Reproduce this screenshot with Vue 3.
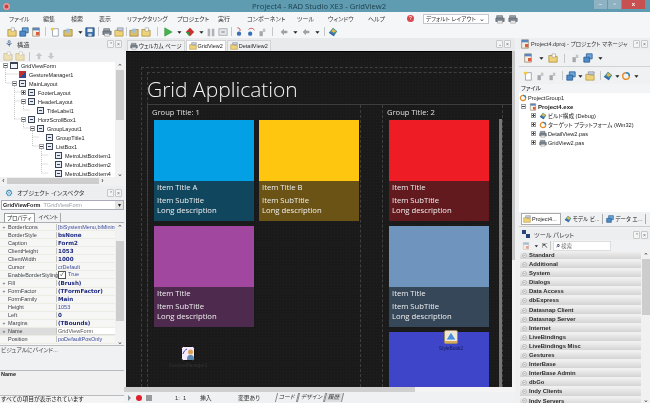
<script setup>
const menus = [
  ['ファイル', 34], ['編集', 28], ['検索', 28], ['表示', 28], ['リファクタリング', 50], ['プロジェクト', 41],
  ['実行', 29], ['コンポーネント', 50], ['ツール', 31], ['ウィンドウ', 40], ['ヘルプ', 35]
]
const main = [
  ['f', 12], ['w', 12], ['d', 12], ['', 7], ['n', 12], ['o', 14], ['c', 9], ['s', 12], ['', 5], ['p', 12], ['y', 12], ['', 3],
  ['o', 12], ['f', 12], ['', 10], ['r', 12], ['c', 10], ['b', 12], ['c', 10], ['h', 10], ['t', 14], ['', 3],
  ['j', 12], ['k', 12], ['g', 10], ['', 11], ['l', 12], ['c', 10], ['l', 12], ['c', 10], ['', 5], ['u', 12]
]
const pm1 = [['d', 12], ['c', 13], ['f', 12], ['', 10], ['g', 12], ['w', 14], ['c', 9]]
const pm2 = [['n', 12], ['g', 12], ['g', 12], ['', 8], ['w', 9], ['c', 9], ['y', 12], ['', 8], ['u', 8], ['c', 9], ['e', 10], ['c', 9]]
const tree = [
  ['GridViewForm', 0, 'm', 'frm'], ['GestureManager1', 1, '', 'gm'], ['MainLayout', 1, 'm', 'lay'],
  ['FooterLayout', 2, 'p', 'lay'], ['HeaderLayout', 2, 'm', 'lay'], ['TitleLabel1', 3, '', 'lay'],
  ['HorzScrollBox1', 2, 'm', 'lay'], ['GroupLayout1', 3, 'm', 'lay'], ['GroupTitle1', 4, '', 'lay'],
  ['ListBox1', 4, 'm', 'lay'], ['MetroListBoxItem1', 5, '', 'lay'], ['MetroListBoxItem2', 5, '', 'lay'], ['MetroListBoxItem4', 5, '', 'lay']
]
const props = [
  ['BorderIcons', '[biSystemMenu,biMinim', 'n', true], ['BorderStyle', 'bsNone', 'b'], ['Caption', 'Form2', 'b'],
  ['ClientHeight', '1053', 'b'], ['ClientWidth', '1000', 'b'], ['Cursor', 'crDefault', 'n'],
  ['EnableBorderStyling', 'True', 'k'], ['Fill', '(Brush)', 'b', true], ['FormFactor', '(TFormFactor)', 'b', true],
  ['FormFamily', 'Main', 'b'], ['Height', '1053', 'n'], ['Left', '0', 'b'], ['Margins', '(TBounds)', 'b', true],
  ['Name', 'GridViewForm', 'x'], ['Position', 'poDefaultPosOnly', 'n']
]
const group1 = [
  { t: 'Item Title A', c: '#04a0e6', d: '#11465f' },
  { t: 'Item Title B', c: '#ffc60f', d: '#6a5314' },
  { t: 'Item Title', c: '#a1479f', d: '#4e2a4f' }
]
const group2 = [
  { t: 'Item Title', c: '#ee1c25', d: '#631a1f' },
  { t: 'Item Title', c: '#6f95bf', d: '#36475a' },
  { t: '', c: '#3e45c9', d: '#3e45c9' }
]
const files = [
  ['ProjectGroup1', 0, '', 'e', ''], ['Project4.exe', 1, 'm', 'd', 'bold'], ['ビルド構成 (Debug)', 2, 'p', 'u', ''],
  ['ターゲット プラットフォーム (Win32)', 2, 'p', 'e', ''], ['DetailView2.pas', 2, 'p', 'p', ''], ['GridView2.pas', 2, 'p', 'p', '']
]
const palette = ['Standard', 'Additional', 'System', 'Dialogs', 'Data Access', 'dbExpress', 'Datasnap Client', 'Datasnap Server', 'Internet',
  'LiveBindings', 'LiveBindings Misc', 'Gestures', 'InterBase', 'InterBase Admin', 'dbGo', 'Indy Clients', 'Indy Servers']
</script>

<template>
  <div class="ide">
    <svg class="defs" aria-hidden="true">
      <symbol id="f" viewBox="0 0 12 12"><path d="M1 3h4l1 1h5v7H1z" fill="#ecd27a" stroke="#a8842c" stroke-width=".8"/><path d="M5 1h4v4H5z" fill="#fff" stroke="#888" stroke-width=".6"/></symbol>
      <symbol id="w" viewBox="0 0 12 12"><path d="M4 1h7v6H4z" fill="#6ea6d8" stroke="#2c5f96"/><path d="M1 5h7v6H1z" fill="#4d8ac6" stroke="#2c5f96"/></symbol>
      <symbol id="d" viewBox="0 0 12 12"><path d="M2 1h8v10H2z" fill="#f5efe2" stroke="#8a7a60" stroke-width=".8"/><path d="M2 1h8v3H2z" fill="#5a86c0"/><path d="M6 6h4v4H6z" fill="#e05a3c"/></symbol>
      <symbol id="n" viewBox="0 0 12 12"><path d="M3 2h7v9H3z" fill="#fff" stroke="#7a8a9a" stroke-width=".8"/><path d="M1 1h4v3H1z" fill="#f0c94a"/></symbol>
      <symbol id="o" viewBox="0 0 12 12"><path d="M1 4h4l1-1h5v8H1z" fill="#ddc06a" stroke="#8f7a3c" stroke-width=".8"/><path d="M4 2h4v5H4z" fill="#9ac1e4"/></symbol>
      <symbol id="s" viewBox="0 0 12 12"><path d="M1 1h10v10H1z" fill="#3f72ad" stroke="#234a78"/><path d="M3 2h6v4H3z" fill="#e9f0f7"/><path d="M4 8h4v3H4z" fill="#cfd8e2"/></symbol>
      <symbol id="p" viewBox="0 0 12 12"><path d="M2 2h7v3H2z" fill="#9aa4ae" stroke="#59626b" stroke-width=".7"/><path d="M1 5h10v4H1z" fill="#7a8590" stroke="#4d555d" stroke-width=".7"/><path d="M3 8h6v3H3z" fill="#eee" stroke="#777" stroke-width=".5"/></symbol>
      <symbol id="y" viewBox="0 0 12 12"><path d="M1 4h4l1 1h5v6H1z" fill="#ecd27a" stroke="#a8842c" stroke-width=".7"/><path d="M4 1h7v3H4z" fill="#c8d4e2" stroke="#667" stroke-width=".6"/></symbol>
      <symbol id="r" viewBox="0 0 12 12"><path d="M2 1l9 5-9 5z" fill="#43b54a" stroke="#2a8a34" stroke-width=".6"/></symbol>
      <symbol id="b" viewBox="0 0 12 12"><path d="M6 1l5 5-5 5-5-5z" fill="#c92f2f"/><path d="M1 6h4v5z" fill="#2f9a3b"/></symbol>
      <symbol id="h" viewBox="0 0 12 12"><path d="M2 2h3v9H2zM7 2h3v9H7z" fill="#aeb2b6"/></symbol>
      <symbol id="t" viewBox="0 0 12 12"><path d="M1 2h10v8H1z" fill="#e3e5e7" stroke="#a5a9ad"/><path d="M4 5h4v2H4z" fill="#a5a9ad"/></symbol>
      <symbol id="j" viewBox="0 0 12 12"><path d="M4 1c3 0 4 2 3 4" fill="none" stroke="#c03c3c"/><circle cx="6" cy="8" r="2.6" fill="#3a70b8"/></symbol>
      <symbol id="k" viewBox="0 0 12 12"><path d="M3 3c2-2 6-2 7 1" fill="none" stroke="#c03c3c"/><circle cx="5" cy="8" r="2.6" fill="#3a70b8"/></symbol>
      <symbol id="g" viewBox="0 0 12 12"><path d="M3 5h4v6H3z" fill="#a4a8ac"/><path d="M7 2h3v4H7z" fill="#c2c5c8"/></symbol>
      <symbol id="l" viewBox="0 0 12 12"><path d="M2 6l4-4v2.500h4v3H6V10z" fill="#9da1a5"/></symbol>
      <symbol id="u" viewBox="0 0 12 12"><path d="M6 1l5 4-4 6-6-4z" fill="#3b8a9a"/><path d="M6 2l4 3-3 2-3-2z" fill="#e0b94e"/><path d="M1 7l6 4 1-2-5-3z" fill="#3a6ab0"/></symbol>
      <symbol id="e" viewBox="0 0 12 12"><circle cx="6" cy="6" r="4" fill="none" stroke="#e38b2c" stroke-width="1.8"/><path d="M6 2a4 4 0 0 1 4 4" fill="none" stroke="#2e8fd0" stroke-width="1.8"/></symbol>
      <symbol id="c" viewBox="0 0 12 12"><path d="M4 5h5L6.500 8z" fill="#222"/></symbol>
    </svg>

    <header class="title">
      <span class="app-dot"></span>
      <span class="title-text">Project4 - RAD Studio XE3 - GridView2</span>
      <div class="win">
        <span class="wb">–</span><span class="wb">▫</span><span class="wb close">x</span>
      </div>
    </header>

    <nav class="menu">
      <span v-for="m in menus" :key="m[0]" class="mi" :style="{ width: m[1] + 'px' }">{{ m[0] }}</span>
      <span class="help">?</span>
      <div class="combo"><span>デフォルト レイアウト</span><i>⌄</i></div>
      <svg class="ti12 gap-a"><use href="#p"/></svg>
      <svg class="ti12"><use href="#p"/></svg>
    </nav>

    <div class="toolbar">
      <span v-for="(b, i) in main" :key="i" class="cell" :style="{ width: b[1] + 'px' }">
        <svg v-if="b[0]" class="ti"><use :href="'#' + b[0]"/></svg>
        <b v-else class="sep"></b>
      </span>
    </div>

    <div class="body">
      <aside class="left">
        <div class="phead">
          <span class="pglyph">⚘</span><span class="ptext">構造</span>
          <span class="pin">⌃</span><span class="pin">×</span>
        </div>
        <div class="subbar">
          <svg class="ti dim"><use href="#f"/></svg><svg class="ti dim"><use href="#f"/></svg>
          <b class="sep"></b>
          <svg class="ti dim up"><use href="#l"/></svg><svg class="ti dim down"><use href="#l"/></svg>
        </div>
        <div class="tree-wrap">
          <div class="tree">
            <svg class="tlines" viewBox="0 0 115 115" aria-hidden="true">
              <path d="M5.500 6V21H12M5.500 12H20M14.500 24V57M14.500 30H21M14.500 39H21M14.500 57H21M23.500 42V48H30M23.500 60V66H30M32.500 69V84H39M32.500 75H39M41.500 87V111H48M41.500 93H48M41.500 102H48" fill="none" stroke="#aaa" stroke-width=".7" stroke-dasharray="1 1"/>
            </svg>
            <div v-for="n in tree" :key="n[0]" class="tr" :class="'lv' + n[1]">
              <span class="exp" :class="n[2]"></span>
              <span class="nico" :class="n[3]"></span>
              <span class="nlabel">{{ n[0] }}</span>
            </div>
          </div>
          <div class="vs"><i class="arr">⌃</i><b class="thumb t1"></b><i class="arr">⌄</i></div>
        </div>
        <div class="hs"><i>‹</i><b></b><i>›</i></div>

        <div class="phead oi">
          <span class="pglyph blue">⚙</span><span class="ptext">オブジェクト インスペクタ</span>
          <span class="pin">⌃</span><span class="pin">×</span>
        </div>
        <div class="oicombo"><b>GridViewForm</b><em>TGridViewForm</em><i>▾</i></div>
        <div class="oitabs"><span class="on">プロパティ</span><span>イベント</span></div>
        <div class="grid-wrap">
          <div class="pgrid">
            <div v-for="p in props" :key="p[0]" class="pr" :class="{ sel: p[0] === 'Name' }">
              <span class="pmark">{{ p[3] ? '+' : (p[0] === 'Name' ? '»' : '') }}</span>
              <span class="pn">{{ p[0] }}</span>
              <span class="pv" :class="p[2]"><u v-if="p[2] === 'k'" class="check">✓</u>{{ p[1] }}</span>
            </div>
          </div>
          <div class="vs"><i class="arr">⌃</i><b class="thumb t2"></b><i class="arr">⌄</i></div>
        </div>
        <div class="bind">ビジュアルにバインド...</div>
        <div class="info"><b>Name</b></div>
        <div class="allshown">すべての項目が表示されています</div>
      </aside>

      <main class="center">
        <div class="tabs">
          <span class="tab"><svg class="ti tiny"><use href="#p"/></svg>ウェルカム ページ</span>
          <span class="tab on"><svg class="ti tiny"><use href="#y"/></svg>GridView2</span>
          <span class="tab"><svg class="ti tiny"><use href="#y"/></svg>DetailView2</span>
          <span class="tabs-pins"><span class="pin">⌄</span><span class="pin">×</span></span>
        </div>
        <div class="designer">
          <div class="canvas">
            <div class="form">
              <div class="inner">
                <div class="apptitle">Grid Application</div>
                <div class="groups">
                  <section class="group g1">
                    <div class="gtitle">Group Title: 1</div>
                    <div class="tiles two">
                      <article v-for="(x, i) in group1" :key="i" class="tile">
                        <div class="swatch" :style="{ background: x.c }"></div>
                        <div class="cap" :style="{ background: x.d }">
                          <div class="c1">{{ x.t }}</div><div>Item SubTitle</div><div>Long description</div>
                        </div>
                      </article>
                    </div>
                  </section>
                  <section class="group g2">
                    <div class="gtitle">Group Title: 2</div>
                    <div class="tiles">
                      <article v-for="(x, i) in group2" :key="i" class="tile">
                        <div class="swatch" :style="{ background: x.c }"></div>
                        <div class="cap" :style="{ background: x.d }">
                          <template v-if="x.t"><div class="c1">{{ x.t }}</div><div>Item SubTitle</div><div>Long description</div></template>
                        </div>
                      </article>
                    </div>
                    <b class="gscroll"></b>
                  </section>
                </div>
              </div>
            </div>
            <div class="nv nv-g">
              <svg viewBox="0 0 14 15"><rect x=".5" y=".5" width="13" height="14" rx="2" fill="#f6e9fb" stroke="#111"/><path d="M2 8c1-3 2-4 4-5" fill="none" stroke="#2a3fb0"/><circle cx="9.500" cy="6" r="2.500" fill="#d7a052"/><path d="M6 14c0-4 1-5 3.500-5S13 10 13 14z" fill="#5c88b0"/></svg>
              <span>GestureManager1</span>
            </div>
            <div class="nv nv-s">
              <svg viewBox="0 0 14 14"><rect x=".5" y=".5" width="13" height="13" rx="1.500" fill="#f1e6d0" stroke="#9a8a68"/><path d="M7 2l5 8H2z" fill="#4c8fd8" stroke="#fff" stroke-width=".7"/><path d="M1 11h12v2H1z" fill="#d8a95c"/></svg>
              <span>StyleBook2</span>
            </div>
          </div>
          <div class="dvs"><b></b></div>
        </div>
        <div class="chs"><b></b></div>
        <footer class="status">
          <i class="st-play"></i><i class="st-rec"></i><i class="st-stop"></i>
          <span class="pos">1:&nbsp;&nbsp;1</span>
          <span class="mode">挿入</span>
          <span class="mod">変更あり</span>
          <span class="vt">コード</span><span class="vt">デザイン</span><span class="vt on">履歴</span>
        </footer>
      </main>

      <aside class="right">
        <div class="phead rh">
          <svg class="ti"><use href="#d"/></svg><span class="ptext small">Project4.dproj - プロジェクト マネージャ</span>
          <span class="pin">⌃</span><span class="pin">×</span>
        </div>
        <div class="rbar r1"><span v-for="(b, i) in pm1" :key="i" class="cell" :style="{ width: b[1] + 'px' }">
          <svg v-if="b[0]" class="ti"><use :href="'#' + b[0]"/></svg><b v-else class="sep"></b></span></div>
        <div class="rbar r2"><span v-for="(b, i) in pm2" :key="i" class="cell" :style="{ width: b[1] + 'px' }">
          <svg v-if="b[0]" class="ti"><use :href="'#' + b[0]"/></svg><b v-else class="sep"></b></span></div>
        <div class="fhead">ファイル</div>
        <div class="files">
          <div v-for="f in files" :key="f[0]" class="fr" :class="'fl' + f[1]">
            <span class="exp" :class="f[2]"></span>
            <svg class="ti tiny2"><use :href="'#' + f[3]"/></svg>
            <span :class="f[4]">{{ f[0] }}</span>
          </div>
        </div>
        <div class="rtabs">
          <span class="rt on"><svg class="ti tiny"><use href="#y"/></svg>Project4...</span>
          <span class="rt"><svg class="ti tiny"><use href="#u"/></svg>モデル ビ...</span>
          <span class="rt"><svg class="ti tiny"><use href="#w"/></svg>データ エ...</span>
        </div>
        <div class="phead tp">
          <span class="pglyph navy">▚</span><span class="ptext">ツール パレット</span>
          <span class="pin">⌃</span><span class="pin">×</span>
        </div>
        <div class="search">
          <svg class="ti tiny2 dim"><use href="#d"/></svg><svg class="ti tiny2"><use href="#c"/></svg>
          <span class="cursor">⇱</span><b class="sep"></b>
          <div class="sbox"><span class="lens">⌕</span>検索</div>
        </div>
        <div class="pal-wrap">
          <div class="pal">
            <div v-for="p in palette" :key="p" class="pi"><i>−</i>{{ p }}</div>
          </div>
          <div class="vs"><i class="arr">⌃</i><b class="thumb t3"></b><i class="arr">⌄</i></div>
        </div>
      </aside>
    </div>
  </div>
</template>

<style scoped>
.ide {
  width: 650px; height: 403px; display: flex; flex-direction: column; overflow: hidden;
  background: #eef0f2; color: #222; font-family: "Liberation Sans", "Noto Sans CJK JP", sans-serif;
  font-size: 5.5px; font-feature-settings: "palt"; filter: blur(.35px);
}
.defs { position: absolute; width: 0; height: 0; }
.title { height: 12px; flex: none; background: #5f9cb1; display: flex; align-items: center; position: relative; }
.app-dot { width: 7px; height: 7px; border-radius: 50%; background: #c8403f; margin-left: 3px; box-shadow: inset 0 0 0 1.5px #e9a0a0; }
.title-text { position: absolute; left: 252px; top: 0; font: 7.7px/12px "Open Sans", sans-serif; color: #1c3d4b; }
.win { margin-left: auto; margin-right: 5px; display: flex; align-self: flex-start; height: 9px; gap: 1px; }
.wb { width: 13px; background: #8fb2c2; color: #fff; text-align: center; font-size: 6px; line-height: 8px; }
.close { width: 23px; background: #c75050; font-weight: bold; }
.menu { height: 13px; flex: none; background: #f5f6f7; display: flex; align-items: center; padding-left: 9px; font-size: 6px; color: #333; }
.mi { flex: none; white-space: nowrap; }
.help { width: 7px; height: 7px; border-radius: 50%; background: #d8484c; color: #fff; font-size: 5px; line-height: 7px; text-align: center; margin-left: 4px; flex: none; }
.combo { width: 66px; height: 10px; margin-left: 9px; background: #fff; border: 1px solid #c4c8cc; box-sizing: border-box; display: flex; justify-content: space-between; align-items: center; padding: 0 3px 0 2px; flex: none; font-size: 5.600px; white-space: nowrap; }
.combo i { font-style: normal; font-size: 7px; line-height: 6px; }
.ti12 { width: 10px; height: 10px; margin-left: 3px; flex: none; }
.gap-a { margin-left: 6px; }
.toolbar { height: 13px; flex: none; background: #f5f6f7; display: flex; align-items: center; padding-left: 6px; }
.cell { display: flex; justify-content: center; align-items: center; flex: none; height: 100%; }
.ti { width: 10px; height: 10px; flex: none; display: block; }
.tiny { width: 8px; height: 8px; margin-right: 1px; }
.tiny2 { width: 8px; height: 8px; }
.sep { width: 1px; height: 9px; background: #c4c6c8; display: block; flex: none; }
.dim { opacity: .5; }
.up { transform: rotate(90deg); }
.down { transform: rotate(-90deg); }

.body { flex: 1; display: flex; min-height: 0; }
.left { width: 124px; flex: none; display: flex; flex-direction: column; background: #f0f1f2; }
.phead { height: 12px; flex: none; display: flex; align-items: center; padding: 0 2px 0 5px; background: #eceef0; font-size: 6.200px; color: #333; }
.pglyph { width: 9px; font-size: 9px; line-height: 10px; color: #3b5c8e; margin-right: 3px; flex: none; }
.pglyph.blue { color: #2c86b8; }
.pglyph.navy { color: #27447a; font-size: 8px; }
.ptext { flex: 1; white-space: nowrap; overflow: hidden; }
.ptext.small { font-size: 5.600px; margin-left: 1px; }
.pin { width: 7px; height: 8px; border: 1px solid #c6c8ca; box-sizing: border-box; font-size: 5px; line-height: 6px; text-align: center; color: #666; background: #f4f4f4; flex: none; margin-left: 1px; border-radius: 1px; }
.subbar { height: 12px; flex: none; display: flex; align-items: center; gap: 2px; padding-left: 3px; }
.subbar .sep { margin: 0 2px; }
.tree-wrap { height: 115px; flex: none; display: flex; background: #fff; overflow: hidden; }
.tree { flex: 1; position: relative; overflow: hidden; color: #222; }
.tlines { position: absolute; left: 0; top: 0; width: 115px; height: 115px; }
.tr { height: 9px; display: flex; align-items: center; white-space: nowrap; position: relative; }
.tr:first-of-type { margin-top: -1px; }
.lv0 { padding-left: 3px; } .lv1 { padding-left: 12px; } .lv2 { padding-left: 21px; }
.lv3 { padding-left: 30px; } .lv4 { padding-left: 39px; } .lv5 { padding-left: 48px; }
.exp { width: 5px; height: 5px; box-sizing: border-box; margin-right: 2px; flex: none; position: relative; }
.exp.m, .exp.p { border: 1px solid #9aa0a6; background: #fff; }
.exp.m::before, .exp.p::before { content: ""; position: absolute; left: 0; right: 0; top: 1px; height: 1px; background: #444; }
.exp.p::after { content: ""; position: absolute; top: 0; bottom: 0; left: 1px; width: 1px; background: #444; }
.nico { width: 7px; height: 7px; box-sizing: border-box; border: 1px solid #3c4352; background: #e8ecf4; margin-right: 3px; flex: none; position: relative; }
.nico::after { content: ""; position: absolute; left: 1px; right: 1px; top: 2px; height: 1px; background: #3c4352; }
.nico.frm { width: 8px; border-top-width: 2px; background: #f2f4f8; }
.nico.frm::after { display: none; }
.nico.gm { border: 0; background: linear-gradient(135deg, #c62f2f 50%, #2c4b98 50%); }
.nico.gm::after { display: none; }
.vs { width: 9px; flex: none; background: #f1f1f1; display: flex; flex-direction: column; align-items: center; }
.arr { font-style: normal; height: 8px; line-height: 9px; font-size: 7px; color: #333; flex: none; }
.thumb { width: 8px; background: #cdcdcd; display: block; flex: none; }
.t1 { height: 50px; margin-bottom: auto; }
.t2 { height: 80px; margin-top: 10px; margin-bottom: auto; }
.t3 { height: 56px; margin-bottom: auto; }
.hs { height: 7px; flex: none; background: #f1f1f1; display: flex; align-items: center; font-size: 7px; margin-bottom: 2px; }
.hs i { font-style: normal; width: 7px; text-align: center; line-height: 7px; }
.hs b { width: 92px; height: 6px; background: #cdcdcd; }
.oi { height: 13px; }
.oicombo { height: 10px; flex: none; background: #fff; border: 1px solid #aab; box-sizing: border-box; display: flex; align-items: center; margin: 1px 0 1px 1px; padding-left: 1px; }
.oicombo b { font-weight: bold; margin-right: 3px; }
.oicombo em { font-style: normal; color: #9aa0a6; }
.oicombo i { margin-left: auto; width: 8px; height: 8px; text-align: center; font-style: normal; line-height: 8px; background: #e4e4e4; }
.oitabs { height: 9px; flex: none; display: flex; padding: 2px 0 0 4px; border-bottom: 1px solid #aeb0b2; gap: 2px; }
.oitabs span { padding: 0 2px; line-height: 8px; border-right: 1px solid #aaa; }
.oitabs .on { background: #fff; border: 1px solid #9a9a9a; border-bottom: 0; }
.grid-wrap { height: 122px; flex: none; display: flex; background: #f6f6f4; }
.pgrid { flex: 1; overflow: hidden; }
.pr { height: 8.070px; display: grid; grid-template-columns: 8px 49px 1fr; align-items: center; border-bottom: 1px solid #ecebe6; box-sizing: border-box; white-space: nowrap; }
.pmark { font-size: 5px; color: #556; text-align: center; }
.pn { color: #3a3f48; border-right: 1px solid #c4c4bc; }
.pv { padding-left: 1px; overflow: hidden; color: #3a4aa0; }
.pv.b { font: bold 5.600px "DejaVu Sans", sans-serif; color: #1e2a80; }
.pv.x { background: #fff; color: #555; }
.sel { background: #dcdcdc; }
.check { display: inline-block; width: 6px; height: 6px; border: 1px solid #555; background: #fff; margin-right: 2px; font-size: 5px; line-height: 5px; text-decoration: none; color: #000; text-align: center; }
.bind { height: 26px; flex: none; font-size: 5.800px; color: #444; box-sizing: border-box; padding-left: 1px; line-height: 8px; border-top: 1px solid #b9bbbd; border-bottom: 1px solid #b9bbbd; }
.info { height: 25px; flex: none; padding-left: 1px; line-height: 7px; box-sizing: border-box; background: #f0f0f0; border-bottom: 1px solid #b9bbbd; }
.allshown { flex: 1; font-size: 5.800px; padding-left: 1px; line-height: 7px; white-space: nowrap; background: #f4f4f4; }

.center { width: 391px; flex: none; display: flex; flex-direction: column; min-height: 0; }
.tabs { height: 13px; flex: none; display: flex; align-items: flex-end; padding-left: 3px; gap: 1px; background: #e8eaec; position: relative; }
.tab { height: 11px; display: flex; align-items: center; padding: 0 2px; background: #eef0f1; border: 1px solid #d2d4d6; border-bottom: 0; box-sizing: border-box; font-size: 5.500px; white-space: nowrap; }
.tab.on { background: #fff; }
.tabs-pins { position: absolute; right: 4px; top: 2px; display: flex; }
.designer { flex: 1; display: flex; min-height: 0; }
.canvas { flex: 1; position: relative; overflow: hidden; margin-left: 2px; padding: 15px 0 0 15px; border-top: 1px solid #000; display: flex; background-color: #1a1a1a;
  background-image: radial-gradient(#212121 .6px, transparent .7px); background-size: 3px 3px; }
.form { flex: 1; border: 1px dashed #3f3f3f; border-right: 0; border-bottom: 0; padding: 4px 0 0 5px; display: flex; min-width: 0; }
.inner { flex: 1; border-top: 1px dashed #3f3f3f; border-left: 1px dashed #3f3f3f; display: flex; flex-direction: column; min-width: 0; }
.apptitle { height: 31px; flex: none; font: 300 21px/32px "Open Sans", sans-serif; color: #f4f4f4; white-space: nowrap; border-bottom: 1px solid #3e3e3e; margin-left: -1px; }
.groups { flex: 1; display: flex; min-height: 0; }
.group { position: relative; border-right: 1px dashed #3f3f3f; border-left: 1px dashed #3f3f3f; flex: none; box-sizing: border-box; color: #e6e6e6; font: 8px/1 "Open Sans", sans-serif; overflow: hidden; }
.g1 { width: 214px; margin-left: -1px; }
.g2 { width: 121px; margin-left: 21px; }
.gtitle { height: 15px; padding-left: 4px; line-height: 15px; font-size: 7.600px; color: #e0e0e0; }
.tiles { display: grid; grid-template-columns: 100px; grid-auto-rows: 101px; gap: 5px; padding-left: 6px; }
.tiles.two { grid-template-columns: 100px 100px; }
.tile { display: flex; flex-direction: column; }
.swatch { height: 61px; flex: none; }
.cap { flex: 1; padding-left: 3px; font-size: 7.700px; line-height: 10px; color: #efefef; white-space: nowrap; }
.c1 { height: 12px; line-height: 12px; margin-bottom: 2px; }
.gscroll { position: absolute; right: -1px; top: 14px; bottom: 0; width: 4px; background: #777; display: block; }
.nv { position: absolute; display: flex; flex-direction: column; align-items: center; font-size: 4.800px; white-space: nowrap; }
.nv svg { display: block; margin-bottom: 2px; }
.nv-g { left: 40px; top: 294px; width: 44px; color: #333; }
.nv-g svg { width: 14px; height: 15px; }
.nv-s { left: 305px; top: 278px; width: 40px; color: #161e55; }
.nv-s svg { width: 14px; height: 14px; }
.dvs { width: 3px; flex: none; background: #f3f3f3; }
.dvs b { display: block; height: 209px; background: #c8c8c8; }
.chs { height: 5px; flex: none; background: #f4f4f4; }
.chs b { display: block; width: 291px; height: 100%; background: #cfcfcf; }
.status { height: 11px; flex: none; display: flex; align-items: center; background: #f0f1f2; padding-left: 4px; font-size: 5.800px; color: #333; }
.st-play { width: 0; height: 0; border-left: 3px solid #8a9096; border-top: 3px solid transparent; border-bottom: 3px solid transparent; margin-right: 5px; }
.st-rec { width: 6px; height: 6px; border-radius: 50%; background: #e01f2c; margin-right: 4px; }
.st-stop { width: 6px; height: 6px; background: #9a9a9a; }
.pos { margin-left: 23px; width: 25px; }
.mode { width: 38px; }
.mod { width: 38px; }
.vt { border: 1px solid #8a8a8a; border-top: 0; border-bottom: 0; transform: skewX(-14deg); padding: 0 2px; line-height: 9px; }
.vt.on { background: #dcdee0; }

.right { margin-left: 4px; flex: 1; display: flex; flex-direction: column; min-width: 0; background: #f0f1f2; min-height: 0; }
.rh { height: 12px; padding-left: 1px; }
.rbar { display: flex; align-items: center; flex: none; padding-left: 3px; }
.r1 { height: 16px; border-bottom: 1px solid #d0d2d4; }
.r2 { height: 17px; }
.fhead { height: 9px; line-height: 9px; flex: none; padding-left: 2px; background: #f2f4f6; font-size: 5.800px; }
.files { height: 119px; flex: none; background: #fff; box-sizing: border-box; overflow: hidden; }
.fr { height: 9px; display: flex; align-items: center; gap: 1px; white-space: nowrap; font-size: 5.600px; }
.fl0 { padding-left: 0; } .fl0 .exp { display: none; }
.fl1 { padding-left: 2px; } .fl2 { padding-left: 12px; }
.bold { font-weight: bold; font-size: 6px; }
.rtabs { height: 14px; flex: none; display: flex; align-items: center; padding-left: 2px; gap: 2px; border-bottom: 1px solid #ccc; }
.rt { display: flex; align-items: center; padding: 0 3px 0 1px; height: 10px; border-right: 1px solid #aaa; white-space: nowrap; font-size: 5.500px; }
.rt.on { background: #fff; border: 1px solid #aaa; }
.tp { margin-top: 2px; height: 11px; padding-left: 3px; }
.search { height: 11px; flex: none; display: flex; align-items: center; gap: 2px; padding-left: 3px; }
.cursor { font-size: 7px; }
.sbox { width: 58px; height: 10px; background: #fff; border: 1px solid #ddd; box-sizing: border-box; padding-left: 2px; line-height: 8px; color: #777; font-size: 5.500px; display: flex; align-items: center; gap: 1px; }
.lens { font-size: 8px; color: #335; line-height: 8px; }
.pal-wrap { flex: 1; display: flex; min-height: 0; overflow: hidden; }
.pal { flex: 1; overflow: hidden; }
.pi { height: 9.100px; box-sizing: border-box; padding-left: 2px; margin-left: 1px; border-bottom: 1px solid #f0f0f0; background: linear-gradient(#f1f1f1, #d4d4d4); font: bold 5.900px/8.500px "Liberation Sans", sans-serif; color: #2a2a2a; white-space: nowrap; }
.pi i { display: inline-block; width: 5px; height: 5px; margin-right: 2px; border-radius: 50%; background: #eee; border: 1px solid #bbb; box-sizing: border-box; font: 4px/3px sans-serif; text-align: center; vertical-align: middle; }
</style>

<style>
html, body { margin: 0; background: #eef0f2; }
</style>
